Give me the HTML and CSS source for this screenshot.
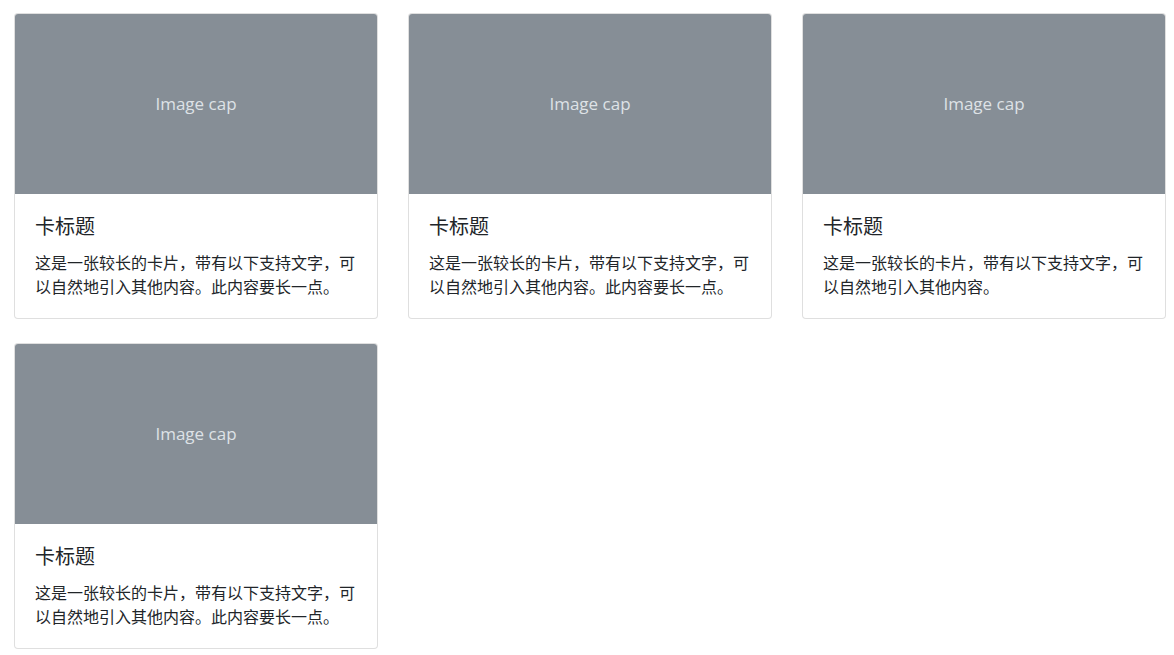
FILE: index.html
```html
<!DOCTYPE html>
<html lang="zh-CN">
<head>
    <meta charset="UTF-8">
    <meta name="viewport" content="width=device-width, initial-scale=1.0">
    <title>Cards</title>
    <link rel="stylesheet" href="styles.css">
</head>
<body>

    <div class="card-grid">
        <div class="card">
            <div class="card-img">Image cap</div>
            <div class="card-body">
                <h5 class="card-title">卡标题</h5>
                <p class="card-text">这是一张较长的卡片，带有以下支持文字，可以自然地引入其他内容。此内容要长一点。</p>
            </div>
        </div>

        <div class="card">
            <div class="card-img">Image cap</div>
            <div class="card-body">
                <h5 class="card-title">卡标题</h5>
                <p class="card-text">这是一张较长的卡片，带有以下支持文字，可以自然地引入其他内容。此内容要长一点。</p>
            </div>
        </div>

        <div class="card">
            <div class="card-img">Image cap</div>
            <div class="card-body">
                <h5 class="card-title">卡标题</h5>
                <p class="card-text">这是一张较长的卡片，带有以下支持文字，可以自然地引入其他内容。</p>
            </div>
        </div>

        <div class="card">
            <div class="card-img">Image cap</div>
            <div class="card-body">
                <h5 class="card-title">卡标题</h5>
                <p class="card-text">这是一张较长的卡片，带有以下支持文字，可以自然地引入其他内容。此内容要长一点。</p>
            </div>
        </div>
    </div>

</body>
</html>
```

FILE: styles.css
```css
body {
    margin: 0;
    padding: 13px 8px 0 14px;
    background: #ffffff;
    color: #212529;
    font-family: "Noto Sans CJK SC", "Open Sans", sans-serif;
    font-size: 16px;
    line-height: 1.5;
}

.card-grid {
    width: 1152px;
    display: grid;
    grid-template-columns: repeat(3, 364px);
    column-gap: 30px;
    row-gap: 24px;
    align-items: start;
}

.card {
    border: 1px solid rgba(0, 0, 0, 0.125);
    border-radius: 4px;
    background: #ffffff;
    overflow: hidden;
}

.card-img {
    height: 180px;
    background: #868e96;
    color: #dee2e6;
    font-family: "Open Sans", sans-serif;
    font-size: 17px;
    display: flex;
    align-items: center;
    justify-content: center;
}

.card-body {
    padding: 20px;
}

.card-title {
    margin: 0 0 12px;
    font-size: 20px;
    font-weight: 400;
    line-height: 1.2;
}

.card-text {
    margin: 0;
    font-size: 16px;
    line-height: 24px;
}
```
